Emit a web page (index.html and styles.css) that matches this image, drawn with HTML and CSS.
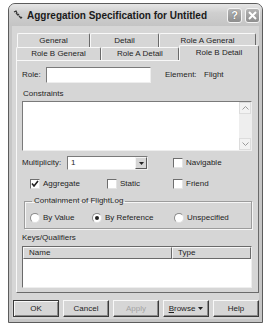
FILE: index.html
```html
<!DOCTYPE html>
<html lang="en">
<head>
    <meta charset="UTF-8">
    <title>Aggregation Specification</title>
    <link rel="stylesheet" href="styles.css">
</head>
<body>
<div class="window">
    <div class="titlebar">
        <svg class="appicon" width="10" height="10" viewBox="0 0 10 10">
            <path d="M1 2 L3 1 L4 3 M3 3 L5 5 L6 4 M6 6 L8 8 L9 7" fill="none" stroke="#333" stroke-width="1.3"/>
        </svg>
        <span class="title">Aggregation Specification for Untitled</span>
        <span class="capbtn help">?</span>
        <span class="capbtn close">
            <svg width="9" height="9" viewBox="0 0 9 9"><path d="M1 1 L8 8 M8 1 L1 8" stroke="#fff" stroke-width="2"/></svg>
        </span>
    </div>
    <div class="client">
        <div class="tabrow back">
            <div class="tab t-general">General</div>
            <div class="tab t-detail">Detail</div>
            <div class="tab t-rag">Role A General</div>
        </div>
        <div class="tabrow front">
            <div class="tab t-rbg">Role B General</div>
            <div class="tab t-rad">Role A Detail</div>
            <div class="tab t-rbd active">Role B Detail</div>
        </div>
        <div class="panel">
            <div class="row role-row">
                <span class="lbl role-lbl">Role:</span>
                <div class="field role-field"></div>
                <span class="lbl elem-lbl">Element:</span>
                <span class="lbl">Flight</span>
            </div>
            <div class="lbl caption constraints-cap">Constraints</div>
            <div class="memo">
                <div class="memo-text"></div>
                <div class="vscroll">
                    <span class="sbtn"><svg width="7" height="4" viewBox="0 0 7 4"><path d="M0.5 3.5 L3.5 0.5 L6.5 3.5" fill="none" stroke="#9a9a9a"/></svg></span>
                    <span class="strack"></span>
                    <span class="sbtn"><svg width="7" height="4" viewBox="0 0 7 4"><path d="M0.5 0.5 L3.5 3.5 L6.5 0.5" fill="none" stroke="#9a9a9a"/></svg></span>
                </div>
            </div>
            <div class="row mult-row">
                <span class="lbl mult-lbl">Multiplicity:</span>
                <div class="combo">
                    <span class="combo-text">1</span>
                    <span class="combo-btn"><svg width="5" height="3" viewBox="0 0 5 3"><path d="M0 0 H5 L2.5 3 Z" fill="#222"/></svg></span>
                </div>
                <span class="check nav-check"><span class="box"></span>Navigable</span>
            </div>
            <div class="row check-row">
                <span class="check c1"><span class="box"><svg width="8" height="8" viewBox="0 0 8 8"><path d="M1 3.5 L3 6 L7 1" fill="none" stroke="#222" stroke-width="1.6"/></svg></span>Aggregate</span>
                <span class="check c2"><span class="box"></span>Static</span>
                <span class="check"><span class="box"></span>Friend</span>
            </div>
            <fieldset class="group">
                <legend>Containment of FlightLog</legend>
                <div class="row radio-row">
                    <span class="radio r1"><span class="dot"></span>By Value</span>
                    <span class="radio r2"><span class="dot on"></span>By Reference</span>
                    <span class="radio"><span class="dot"></span>Unspecified</span>
                </div>
            </fieldset>
            <div class="lbl caption keys-cap">Keys/Qualifiers</div>
            <div class="listview">
                <div class="lv-head">
                    <span class="col name-col">Name</span>
                    <span class="col type-col">Type</span>
                </div>
            </div>
        </div>
        <div class="buttons">
            <span class="btn default">OK</span>
            <span class="btn">Cancel</span>
            <span class="btn disabled">Apply</span>
            <span class="btn"><span><u>B</u>rowse</span><svg width="5" height="3" viewBox="0 0 5 3"><path d="M0 0 H5 L2.5 3 Z" fill="#222"/></svg></span>
            <span class="btn">Help</span>
        </div>
    </div>
</div>
</body>
</html>
```

FILE: styles.css
```css
*{
    margin: 0;
    padding: 0;
    box-sizing: border-box;
}
body{
    background: #fff;
    font-family: "Liberation Sans", Arial, sans-serif;
    font-size: 8px;
    color: #1e1e1e;
}
.window{
    margin: 3px 0 0 8px;
    width: 255px;
    height: 320px;
    border: 1px solid #5c5c5c;
    border-radius: 7px 7px 0 0;
    background: #c6c6c6;
    display: flex;
    flex-direction: column;
    overflow: hidden;
}
.titlebar{
    height: 22px;
    display: flex;
    align-items: center;
    padding: 0 2px 0 4px;
    background: linear-gradient(#e6e6e6, #cfcfcf 40%, #c4c4c4);
}
.appicon{
    margin-right: 4px;
}
.title{
    flex: 1;
    font-size: 10px;
    font-weight: bold;
    color: #1a1a1a;
}
.capbtn{
    width: 15px;
    height: 15px;
    border: 1px solid #f4f4f4;
    border-radius: 3px;
    background: linear-gradient(#b4b4b4, #8e8e8e);
    display: flex;
    align-items: center;
    justify-content: center;
    color: #fff;
    font-size: 11px;
    font-weight: bold;
    text-shadow: 0 0 1px #444;
}
.capbtn.help{
    margin-right: 3px;
}
.client{
    flex: 1;
    margin: 0 3px 3px;
    background: #d6d6d6;
    padding: 7px 0 0 4px;
}
.tabrow{
    display: flex;
}
.tab{
    text-align: center;
    border: 1px solid #f8f8f8;
    border-right-color: #6a6a6a;
    border-bottom: none;
    border-radius: 2px 2px 0 0;
    background: #d6d6d6;
}
.tabrow.back .tab{
    height: 14px;
    line-height: 13px;
}
.tabrow.back{
    margin-left: 1px;
}
.t-general{ width: 73px; }
.t-detail{ width: 69px; }
.t-rag{ width: 97px; }
.tabrow.front .tab{
    height: 13px;
    line-height: 12px;
}
.t-rbg{ width: 85px; }
.t-rad{ width: 78px; }
.tabrow.front .tab.active{
    width: 80px;
    height: 16px;
    margin-top: -2px;
    margin-bottom: -1px;
    line-height: 14px;
    position: relative;
    z-index: 1;
}
.panel{
    width: 243px;
    border: 1px solid #f8f8f8;
    border-right-color: #6a6a6a;
    border-bottom-color: #6a6a6a;
    padding: 0 0 4px 5px;
}
.row{
    display: flex;
    align-items: center;
}
.lbl{
    line-height: 10px;
    white-space: nowrap;
}
.role-row{
    margin-top: 6px;
    height: 16px;
}
.role-lbl{
    width: 24px;
}
.field{
    background: #fff;
    border: 1px solid #7a7a7a;
    border-right-color: #eee;
    border-bottom-color: #eee;
}
.role-field{
    width: 105px;
    height: 16px;
}
.elem-lbl{
    margin-left: 14px;
    width: 39px;
}
.caption{
    height: 10px;
}
.constraints-cap{
    margin-top: 6px;
    padding-left: 1px;
}
.memo{
    margin-top: 2px;
    width: 230px;
    height: 50px;
    display: flex;
    background: #fff;
    border: 1px solid #7a7a7a;
    border-right-color: #eee;
    border-bottom-color: #eee;
}
.memo-text{
    flex: 1;
}
.vscroll{
    width: 12px;
    display: flex;
    flex-direction: column;
    background: #eeeeee;
}
.sbtn{
    height: 12px;
    display: flex;
    align-items: center;
    justify-content: center;
    background: #f2f2f2;
    border: 1px solid #dcdcdc;
}
.strack{
    flex: 1;
}
.mult-row{
    margin-top: 5px;
    height: 14px;
}
.mult-lbl{
    width: 45px;
}
.combo{
    width: 81px;
    height: 14px;
    display: flex;
    background: #fff;
    border: 1px solid #7a7a7a;
    border-right-color: #eee;
    border-bottom-color: #eee;
}
.combo-text{
    flex: 1;
    line-height: 12px;
    padding-left: 3px;
}
.combo-btn{
    width: 12px;
    display: flex;
    align-items: center;
    justify-content: center;
    background: #d6d6d6;
    border: 1px solid #f4f4f4;
    border-right-color: #5a5a5a;
    border-bottom-color: #5a5a5a;
}
.check,
.radio{
    display: flex;
    align-items: center;
    line-height: 10px;
    white-space: nowrap;
}
.nav-check{
    margin-left: 25px;
}
.box{
    width: 10px;
    height: 10px;
    margin-right: 3px;
    background: #fff;
    border: 1px solid #6e6e6e;
    border-right-color: #e4e4e4;
    border-bottom-color: #e4e4e4;
    display: flex;
    align-items: center;
    justify-content: center;
}
.check-row{
    margin-top: 7px;
    height: 14px;
    padding-left: 8px;
}
.c1{ width: 77px; }
.c2{ width: 66px; }
.group{
    margin: 5px 0 0 2px;
    width: 228px;
    min-width: 0;
    padding: 0 0 5px 5px;
    border: 1px solid #9c9c9c;
    box-shadow: inset 1px 1px #f6f6f6, 1px 1px #f6f6f6;
}
.group legend{
    margin-left: 2px;
    padding: 0 2px;
    line-height: 10px;
}
.radio-row{
    margin-top: 7px;
    height: 10px;
}
.r1{ width: 62px; }
.r2{ width: 82px; }
.dot{
    width: 10px;
    height: 10px;
    margin-right: 3px;
    border-radius: 50%;
    background: #fff;
    border: 1px solid #8a8a8a;
    border-right-color: #e0e0e0;
    border-bottom-color: #e0e0e0;
    display: flex;
    align-items: center;
    justify-content: center;
}
.dot.on::after{
    content: "";
    width: 4px;
    height: 4px;
    border-radius: 50%;
    background: #222;
}
.keys-cap{
    margin-top: 4px;
}
.listview{
    margin-top: 3px;
    width: 230px;
    height: 42px;
    background: #fff;
    border: 1px solid #6a6a6a;
    border-right-color: #eee;
    border-bottom-color: #eee;
}
.lv-head{
    display: flex;
    height: 12px;
}
.col{
    line-height: 10px;
    padding-left: 5px;
    background: #d6d6d6;
    border: 1px solid #f8f8f8;
    border-right-color: #6a6a6a;
    border-bottom-color: #6a6a6a;
}
.name-col{
    width: 149px;
}
.type-col{
    flex: 1;
}
.buttons{
    display: flex;
    gap: 4px;
    margin: 7px 0 0 -3px;
}
.btn{
    width: 46px;
    height: 17px;
    display: flex;
    align-items: center;
    justify-content: center;
    gap: 3px;
    background: #d6d6d6;
    border: 1px solid #f8f8f8;
    border-right-color: #3a3a3a;
    border-bottom-color: #3a3a3a;
    box-shadow: inset -1px -1px #8a8a8a;
}
.btn.default{
    border: 1px solid #3a3a3a;
    box-shadow: inset 1px 1px #f8f8f8, inset -1px -1px #8a8a8a;
}
.btn.disabled{
    color: #a4a4a4;
}
```
